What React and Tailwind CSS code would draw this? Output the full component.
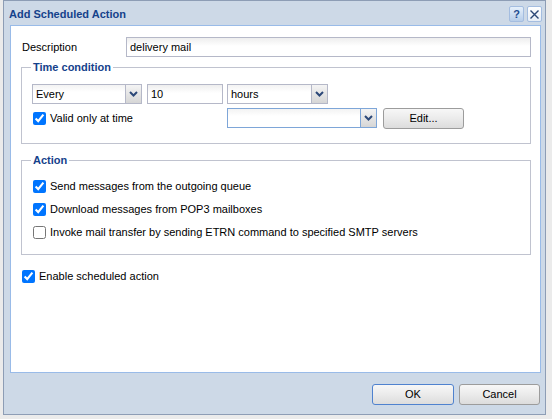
import React from "react";

const font = { fontFamily: '"Liberation Sans", Arial, sans-serif' };

function Chevron() {
  return (
    <svg width="9" height="6" viewBox="0 0 9 6">
      <path d="M1 1 L4.5 4.5 L8 1" fill="none" stroke="#2c4878" strokeWidth="2" />
    </svg>
  );
}

function Select({ value, width, blue }) {
  return (
    <div
      className={`flex h-[20px] border bg-white ${blue ? "border-[#7ea6d8]" : "border-[#b5b8c8]"}`}
      style={{ width }}
    >
      <div className="flex-1 flex items-center pl-[3px] text-[11px] text-black bg-gradient-to-b from-[#f3f3f3] to-white to-[40%]">
        {value}
      </div>
      <div
        className={`w-[16px] flex items-center justify-center border-l bg-gradient-to-b from-[#f4f4f4] to-[#d6d6d6] ${
          blue ? "border-[#7ea6d8]" : "border-[#b5b8c8]"
        }`}
      >
        <Chevron />
      </div>
    </div>
  );
}

function Input({ value, width }) {
  return (
    <div
      className="h-[20px] border border-[#b5b8c8] flex items-center pl-[3px] text-[11px] text-black bg-gradient-to-b from-[#eeeeee] to-white to-[45%]"
      style={{ width }}
    >
      {value}
    </div>
  );
}

function Button({ children, width, focus }) {
  return (
    <button
      className={`h-[21px] rounded-[3px] border text-[11px] text-black bg-gradient-to-b from-[#f7f7f7] via-[#ebebeb] to-[#dcdcdc] ${
        focus ? "border-[#4f82cf]" : "border-[#9c9c9c]"
      }`}
      style={{ width, ...font }}
    >
      {children}
    </button>
  );
}

function Check({ label, checked }) {
  return (
    <label className="h-[23px] flex items-center gap-[4px] text-[11px] text-black">
      <input type="checkbox" defaultChecked={checked} className="w-[13px] h-[13px] m-0" />
      <span>{label}</span>
    </label>
  );
}

export default function App() {
  return (
    <div className="w-[552px] h-[419px] bg-[#ebebeb] overflow-hidden" style={font}>
      <div className="ml-[3px] w-[543px] h-[415px] border border-[#8d9db5] bg-[#cdd9e7] flex flex-col">
        {/* title bar */}
        <div className="h-[24px] flex items-center pl-[5px] pr-[3px]">
          <div className="flex-1 text-[11px] font-bold text-[#15428b] pt-[2px]">Add Scheduled Action</div>
          <div className="flex gap-[3px] pt-[2px]">
            <div className="w-[15px] h-[16px] rounded-[2px] border border-[#a4bde0] bg-gradient-to-b from-[#e6f0fb] to-[#b7cde9] flex items-center justify-center text-[11px] font-bold text-[#1f4d91]">
              ?
            </div>
            <div className="w-[15px] h-[16px] rounded-[2px] border border-[#a4bde0] bg-gradient-to-b from-white to-[#e6edf6] flex items-center justify-center">
              <svg width="11" height="11" viewBox="0 0 11 11">
                <path d="M1.5 1.5 L9.5 9.5 M9.5 1.5 L1.5 9.5" stroke="#2a4675" strokeWidth="1.4" />
              </svg>
            </div>
          </div>
        </div>

        {/* body */}
        <div className="ml-[6px] w-[531px] h-[348px] border border-[#99bbe8] bg-white pl-[10px] pt-[11px]">
          <div className="flex items-center h-[20px]">
            <div className="w-[105px] pl-[1px] text-[11px] text-black">Description</div>
            <Input value="delivery mail" width={405} />
          </div>

          <fieldset className="mt-[3px] w-[510px] border border-[#c0c3cf] pl-[10px] pt-[10px] pb-[15px]">
            <legend className="ml-[-1px] px-[2px] text-[11px] font-bold text-[#15428b] leading-[14px]">
              Time condition
            </legend>
            <div className="flex items-center h-[20px]">
              <Select value="Every" width={110} />
              <div className="w-[5px]" />
              <Input value="10" width={76} />
              <div className="w-[4px]" />
              <Select value="hours" width={101} />
            </div>
            <div className="mt-[4px] flex items-center h-[20px]">
              <div className="w-[195px] pl-[1px]">
                <label className="flex items-center gap-[4px] text-[11px] text-black">
                  <input type="checkbox" defaultChecked className="w-[13px] h-[13px] m-0" />
                  <span>Valid only at time</span>
                </label>
              </div>
              <Select value="" width={150} blue />
              <div className="w-[6px]" />
              <Button width={81}>Edit...</Button>
            </div>
          </fieldset>

          <fieldset className="mt-[9px] w-[510px] border border-[#c0c3cf] pl-[11px] pt-[8px] pb-[10px]">
            <legend className="ml-[-2px] px-[2px] text-[11px] font-bold text-[#15428b] leading-[14px]">Action</legend>
            <Check label="Send messages from the outgoing queue" checked />
            <Check label="Download messages from POP3 mailboxes" checked />
            <Check label="Invoke mail transfer by sending ETRN command to specified SMTP servers" />
          </fieldset>

          <div className="mt-[10px] pl-[1px]">
            <Check label="Enable scheduled action" checked />
          </div>
        </div>

        {/* footer */}
        <div className="flex justify-end gap-[5px] pt-[11px] pr-[5px]">
          <Button width={82} focus>
            OK
          </Button>
          <Button width={81}>Cancel</Button>
        </div>
      </div>
    </div>
  );
}
